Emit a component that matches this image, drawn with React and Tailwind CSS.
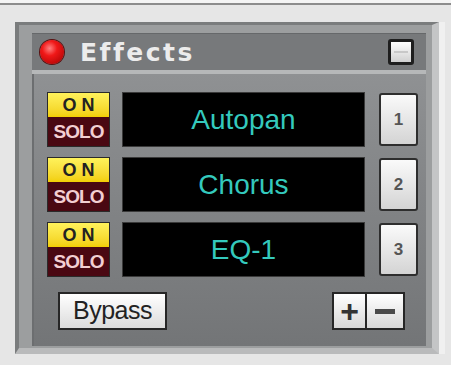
const effects = [
  { name: "Autopan", n: "1" },
  { name: "Chorus", n: "2" },
  { name: "EQ-1", n: "3" },
];

function OnSolo() {
  return (
    <div className="w-[63px] h-[55px] flex flex-col border border-[#2a2a2a]">
      <div className="h-[24px] bg-gradient-to-b from-[#fff25a] to-[#f2cf00] flex items-center justify-center pl-[5px] text-[18px] font-bold text-[#222] tracking-[5px] leading-none">
        ON
      </div>
      <div className="flex-1 bg-[#4a0812] flex items-center justify-center text-[19px] font-bold text-[#f3cfd2] tracking-[-1px] leading-none">
        SOLO
      </div>
    </div>
  );
}

function EffectRow({ name, n }) {
  return (
    <div className="flex items-center h-[55px]">
      <OnSolo />
      <div className="ml-[12px] w-[243px] h-[55px] bg-black border border-[#3a3a3a] flex items-center justify-center text-[28px] text-[#34c9bd] leading-none">
        {name}
      </div>
      <div className="ml-[14px] w-[39px] h-[53px] rounded-[3px] border-2 border-[#2e2e2e] bg-gradient-to-b from-[#fafafa] to-[#d4d4d4] flex items-center justify-center text-[17px] font-bold text-[#555]">
        {n}
      </div>
    </div>
  );
}

export default function App() {
  return (
    <div className="w-[451px] h-[365px] bg-[#e6e6e6] overflow-hidden font-['Liberation_Sans',Arial,sans-serif]">
      <div className="h-[3px] bg-[#f4f4f4]" />
      <div className="h-[2px] bg-[#8c8c8c]" />
      <div className="flex">
        <div className="ml-[15px] mt-[17px] w-[424px] h-[332px] bg-[#9c9e9f] border-l-[4px] border-t-[3px] border-[#7a7c7d] border-r-[7px] border-r-[#c4c5c6] border-b-[6px] border-b-[#b9babb] pl-[13px] pt-[8px] pr-[6px]">
          <div className="h-[37px] bg-[#77797b] border-t border-[#66686a] flex items-center pl-[8px] pr-[12px]">
            <div className="w-[24px] h-[24px] rounded-full bg-[radial-gradient(circle_at_40%_35%,#ff8080_0%,#f01818_35%,#a00000_100%)] shadow-[0_0_0_1px_#5a1010]" />
            <div className="ml-[16px] text-[25px] font-bold text-[#ececec] tracking-[2.5px] font-['DejaVu_Sans',sans-serif] leading-none">
              Effects
            </div>
            <div className="ml-auto w-[26px] h-[26px] rounded-[3px] border-[3px] border-[#1e1e1e] bg-gradient-to-b from-[#ffffff] to-[#d0d0d0] flex items-center justify-center">
              <div className="w-[14px] h-[2px] bg-[#c8c8c8]" />
            </div>
          </div>
          <div className="h-[4px] bg-[#b6b8b9]" />
          <div className="h-[272px] bg-gradient-to-b from-[#8f9193] to-[#737577] border-l-2 border-[#6c6e70] pl-[13px] pt-[18px]">
            <div className="flex flex-col gap-[10px]">
              {effects.map((e) => (
                <EffectRow key={e.n} {...e} />
              ))}
            </div>
            <div className="flex items-center mt-[15px]">
              <div className="ml-[11px] w-[109px] h-[38px] border-2 border-[#262626] bg-gradient-to-b from-[#ffffff] to-[#dcdcdc] flex items-center justify-center text-[25px] text-[#222] tracking-[-0.5px]">
                Bypass
              </div>
              <div className="ml-[165px] flex">
                <div className="w-[35px] h-[38px] border-2 border-[#262626] bg-gradient-to-b from-[#ffffff] to-[#d8d8d8] flex items-center justify-center text-[32px] font-bold text-[#333] leading-none">
                  +
                </div>
                <div className="w-[38px] h-[38px] border-2 border-l-0 border-[#262626] bg-gradient-to-b from-[#ffffff] to-[#d8d8d8] flex items-center justify-center">
                  <div className="w-[20px] h-[5px] bg-[#4a4a4a]" />
                </div>
              </div>
            </div>
          </div>
        </div>
        <div className="w-[6px] mt-[17px] h-[332px] bg-[#f0f0f0]" />
      </div>
    </div>
  );
}
